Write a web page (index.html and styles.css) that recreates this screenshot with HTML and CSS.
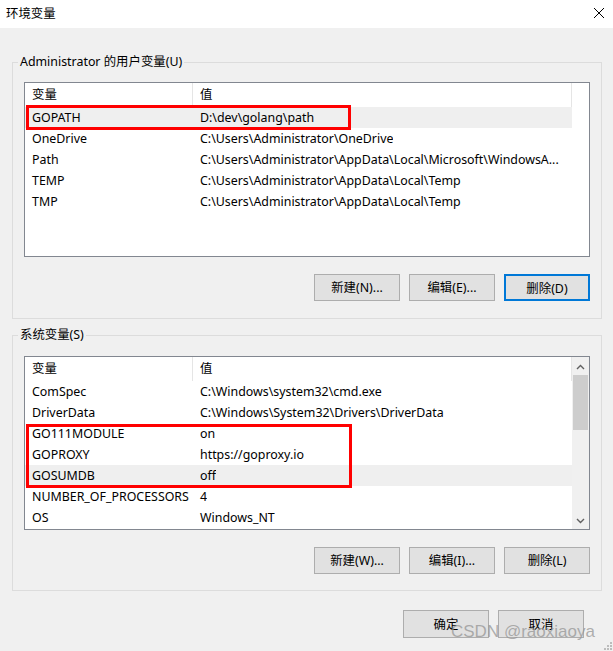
FILE: index.html
```html
<!DOCTYPE html>
<html lang="zh-CN">
<head>
<meta charset="utf-8">
<title>环境变量</title>
<link rel="stylesheet" href="styles.css">
</head>
<body>
<div class="window">
  <div class="titlebar">
    <span class="title">环境变量</span>
    <svg class="close" width="12" height="12" viewBox="0 0 12 12"><path d="M1 1L11 11M11 1L1 11" stroke="#000" stroke-width="1" fill="none"/></svg>
  </div>
  <div class="content">
    <fieldset class="group group-user">
      <legend>Administrator 的用户变量(U)</legend>
      <div class="list list-user">
        <div class="header">
          <div class="hcell c1">变量</div>
          <div class="hcell c2">值</div>
        </div>
        <div class="row hot"><span class="c1">GOPATH</span><span class="c2">D:\dev\golang\path</span></div>
        <div class="row"><span class="c1">OneDrive</span><span class="c2">C:\Users\Administrator\OneDrive</span></div>
        <div class="row"><span class="c1">Path</span><span class="c2">C:\Users\Administrator\AppData\Local\Microsoft\WindowsA...</span></div>
        <div class="row"><span class="c1">TEMP</span><span class="c2">C:\Users\Administrator\AppData\Local\Temp</span></div>
        <div class="row"><span class="c1">TMP</span><span class="c2">C:\Users\Administrator\AppData\Local\Temp</span></div>
        <div class="mark mark-user"></div>
      </div>
      <div class="btns">
        <button class="btn">新建(N)...</button>
        <button class="btn">编辑(E)...</button>
        <button class="btn default">删除(D)</button>
      </div>
    </fieldset>

    <fieldset class="group group-sys">
      <legend>系统变量(S)</legend>
      <div class="list list-sys">
        <div class="list-body">
          <div class="header">
            <div class="hcell c1">变量</div>
            <div class="hcell c2">值</div>
          </div>
          <div class="row"><span class="c1">ComSpec</span><span class="c2">C:\Windows\system32\cmd.exe</span></div>
          <div class="row"><span class="c1">DriverData</span><span class="c2">C:\Windows\System32\Drivers\DriverData</span></div>
          <div class="row"><span class="c1">GO111MODULE</span><span class="c2">on</span></div>
          <div class="row"><span class="c1">GOPROXY</span><span class="c2">https://goproxy.io</span></div>
          <div class="row hot"><span class="c1">GOSUMDB</span><span class="c2">off</span></div>
          <div class="row"><span class="c1">NUMBER_OF_PROCESSORS</span><span class="c2">4</span></div>
          <div class="row"><span class="c1">OS</span><span class="c2">Windows_NT</span></div>
        </div>
        <div class="scrollbar">
          <div class="arrow">
            <svg width="9" height="6" viewBox="0 0 9 6"><path d="M1 5L4.5 1.5L8 5" stroke="#606060" stroke-width="1.4" fill="none"/></svg>
          </div>
          <div class="track"><div class="thumb"></div></div>
          <div class="arrow">
            <svg width="9" height="6" viewBox="0 0 9 6"><path d="M1 1L4.5 4.5L8 1" stroke="#606060" stroke-width="1.4" fill="none"/></svg>
          </div>
        </div>
        <div class="mark mark-sys"></div>
      </div>
      <div class="btns">
        <button class="btn">新建(W)...</button>
        <button class="btn">编辑(I)...</button>
        <button class="btn">删除(L)</button>
      </div>
    </fieldset>

    <div class="footer">
      <button class="btn">确定</button>
      <button class="btn">取消</button>
    </div>
  </div>
  <div class="watermark">CSDN @raoxiaoya</div>
  <svg class="grip" width="8" height="8" viewBox="0 0 8 8">
    <rect x="6" y="0" width="2" height="2" fill="#bcbcbc"/>
    <rect x="3" y="3" width="2" height="2" fill="#bcbcbc"/>
    <rect x="6" y="3" width="2" height="2" fill="#bcbcbc"/>
    <rect x="0" y="6" width="2" height="2" fill="#bcbcbc"/>
    <rect x="3" y="6" width="2" height="2" fill="#bcbcbc"/>
    <rect x="6" y="6" width="2" height="2" fill="#bcbcbc"/>
  </svg>
</div>
</body>
</html>
```

FILE: styles.css
```css
* { box-sizing: border-box; }
html, body {
  margin: 0;
  padding: 0;
  background: #f0f0f0;
}
body {
  font-family: "Noto Sans", "Noto Sans CJK SC", sans-serif;
  font-size: 12.4px;
  color: #000;
}
.window {
  position: relative;
  width: 613px;
  height: 651px;
  overflow: hidden;
  background: #f0f0f0;
}
.titlebar {
  height: 28px;
  background: #fff;
  display: flex;
  align-items: center;
  justify-content: space-between;
  padding: 0 8px 3px 6px;
}
.title {
  font-family: "Noto Sans CJK SC", sans-serif;
  font-size: 12.4px;
  line-height: 16px;
}
.close { display: block; }

.content {
  padding: 26px 11px 0 12px;
}
.group {
  margin: 0;
  padding: 12px 11px 17px 11px;
  border: 1px solid #dcdcdc;
  min-width: 0;
}
.group legend {
  padding: 0 2px;
  margin-left: -6px;
  line-height: 16px;
  font-family: "Noto Sans", "Noto Sans CJK SC", sans-serif;
}
.group-sys {
  margin-top: 8px;
  padding-top: 13px;
  padding-bottom: 16px;
}

.list {
  position: relative;
  background: #fff;
  border: 1px solid #828790;
}
.list-user { height: 175px; }
.list-sys {
  height: 174px;
  display: flex;
}
.list-body {
  flex: 1;
  min-width: 0;
}
.header {
  display: flex;
  height: 24px;
  width: 547px;
}
.hcell {
  line-height: 24px;
  padding-left: 7px;
  border-right: 1px solid #e5e5e5;
}
.hcell.c1 { width: 168px; }
.hcell.c2 { flex: 1; }
.row {
  display: flex;
  height: 21px;
  line-height: 22px;
  width: 547px;
  white-space: nowrap;
}
.row.hot { background: #efefef; }
.row .c1 {
  width: 168px;
  padding-left: 7px;
  flex: none;
}
.row .c2 {
  padding-left: 7px;
  overflow: hidden;
}

.scrollbar {
  width: 17px;
  flex: none;
  display: flex;
  flex-direction: column;
  background: #f0f0f0;
  padding: 1px 1px 0 0;
}
.arrow {
  height: 17px;
  display: flex;
  align-items: center;
  justify-content: center;
}
.track {
  flex: 1;
}
.thumb {
  height: 55px;
  margin: 0 0 0 1px;
  background: #cdcdcd;
}

.mark {
  position: absolute;
  border: 3px solid #ff0000;
  pointer-events: none;
}
.mark-user {
  left: 1px;
  top: 22px;
  width: 325px;
  height: 25px;
}
.mark-sys {
  left: 1px;
  top: 67px;
  width: 326px;
  height: 64px;
}

.btns {
  display: flex;
  justify-content: flex-end;
  gap: 9px;
  margin-top: 17px;
}
.btn {
  width: 86px;
  height: 27px;
  margin: 0;
  padding: 0;
  background: #e1e1e1;
  border: 1px solid #adadad;
  font-family: "Noto Sans", "Noto Sans CJK SC", sans-serif;
  font-size: 12.4px;
  color: #000;
  line-height: 25px;
}
.btn.default {
  border: 2px solid #0078d7;
}
.footer {
  display: flex;
  justify-content: flex-end;
  gap: 9px;
  margin-top: 19px;
  padding-right: 18px;
}
.footer .btn { height: 28px; }

.watermark {
  position: absolute;
  left: 451px;
  top: 621px;
  font-family: "Liberation Sans", Arial, sans-serif;
  font-size: 17px;
  line-height: 22px;
  color: rgba(150, 150, 150, 0.75);
  pointer-events: none;
}
.grip {
  position: absolute;
  right: 1px;
  bottom: 1px;
}
```
